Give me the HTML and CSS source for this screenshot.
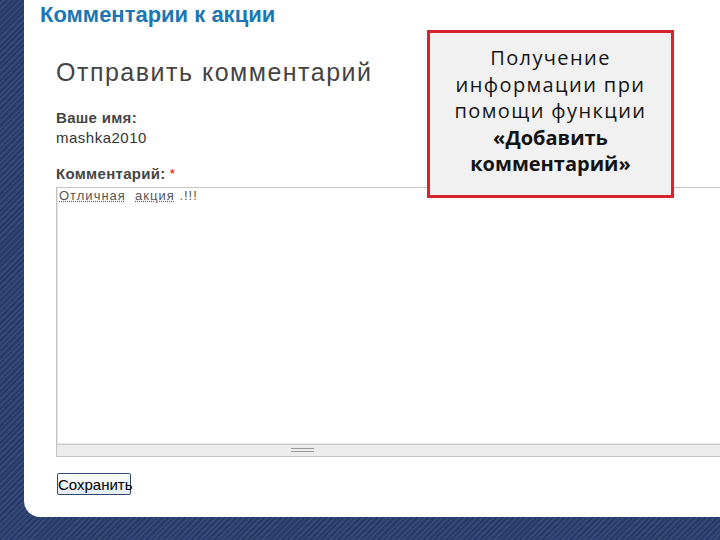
FILE: index.html
```html
<!DOCTYPE html>
<html lang="ru">
<head>
<meta charset="utf-8">
<title>Комментарии к акции</title>
<link rel="stylesheet" href="styles.css">
</head>
<body>
<div class="panel">
  <h1 class="page-title">Комментарии к акции</h1>
  <form class="comment-form">
    <h2 class="form-title">Отправить комментарий</h2>
    <div class="field-label name-label">Ваше имя:</div>
    <div class="field-value">mashka2010</div>
    <div class="field-label comment-label">Комментарий: <span class="req">*</span></div>
    <div class="textarea-wrap">
      <div class="textarea"><span class="typo">Отличная</span>&nbsp;&nbsp;<span class="typo">акция</span>&nbsp;.!!!</div>
      <div class="grip"><span class="grip-lines"></span></div>
    </div>
    <button type="button" class="save-btn">Сохранить</button>
  </form>
</div>
<div class="callout">
  Получение информации при помощи функции <b>«Добавить комментарий»</b>
</div>
</body>
</html>
```
FILE: styles.css
```css
html, body {
  margin: 0;
  padding: 0;
  overflow: hidden;
  width: 720px;
  height: 540px;
}
body {
  background-color: #2c3e6c;
  background-image: repeating-linear-gradient(135deg, #293a65 0 2px, #34487b 2px 4px);
  font-family: "Liberation Sans", Arial, sans-serif;
  position: relative;
}
.panel {
  margin-left: 24px;
  height: 517px;
  width: 720px;
  background: #ffffff;
  border-bottom-left-radius: 16px;
  box-sizing: border-box;
  padding: 2px 0 0 16px;
}
.page-title {
  margin: 0;
  font-size: 22px;
  line-height: 26px;
  font-weight: bold;
  color: #1b77b3;
}
.comment-form {
  padding-left: 16px;
}
.form-title {
  margin: 29px 0 0;
  font-size: 25px;
  line-height: 30px;
  font-weight: normal;
  color: #444444;
  letter-spacing: 1.5px;
}
.field-label {
  font-size: 15px;
  line-height: 18px;
  font-weight: bold;
  color: #454545;
  letter-spacing: 0.3px;
}
.name-label {
  margin-top: 22px;
}
.field-value {
  margin-top: 2px;
  font-size: 15px;
  line-height: 18px;
  color: #333333;
  letter-spacing: 0.5px;
}
.comment-label {
  margin-top: 18px;
}
.req {
  color: #e0443a;
  font-size: 12px;
  vertical-align: top;
}
.textarea-wrap {
  margin-top: 4px;
  width: 700px;
  border: 1px solid #c4c4c4;
  border-right: none;
  background: #ffffff;
}
.textarea {
  height: 254px;
  border-left: 1px solid #e2e2e2;
  border-bottom: 1px solid #e6e6e6;
  padding: 1px 0 0 1px;
  font-size: 13px;
  line-height: 14px;
  color: #555555;
  letter-spacing: 1px;
}
.typo {
  text-decoration: underline dotted #e03030;
}
.grip {
  height: 11px;
  background: #ececec;
  border-top: 1px solid #c8c8c8;
}
.grip-lines {
  display: block;
  margin-left: 234px;
  margin-top: 3px;
  width: 23px;
  height: 2px;
  border-top: 1px solid #9a9a9a;
  border-bottom: 1px solid #9a9a9a;
}
.save-btn {
  margin-top: 16px;
  margin-left: 1px;
  width: 74px;
  height: 22px;
  padding: 0;
  font-family: "Liberation Sans", Arial, sans-serif;
  font-size: 15px;
  color: #000000;
  background: linear-gradient(#fbfdff, #e6edf5);
  border: 1px solid #2f4a72;
  border-radius: 2px;
}
.callout {
  position: absolute;
  left: 427px;
  top: 30px;
  width: 247px;
  height: 168px;
  box-sizing: border-box;
  border: 3px solid #d3242f;
  background: #f1f1f1;
  padding: 12px 4px 0;
  text-align: center;
  font-family: "Open Sans", "DejaVu Sans", sans-serif;
  font-size: 20px;
  line-height: 26.5px;
  color: #141414;
  letter-spacing: 1.4px;
}
.callout b {
  font-weight: bold;
  letter-spacing: 0;
}
```
